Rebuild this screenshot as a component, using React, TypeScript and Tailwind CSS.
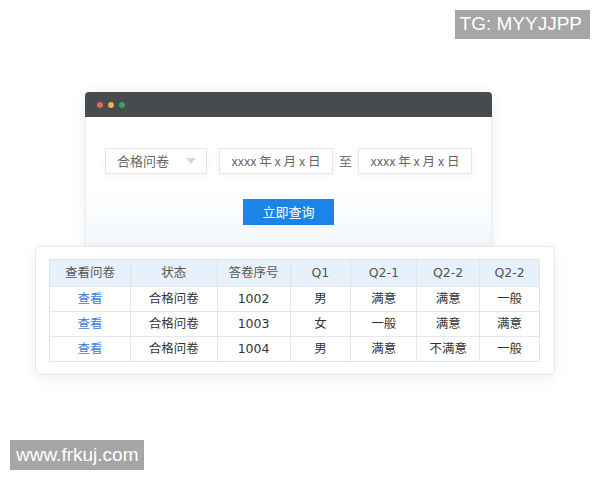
const font = { fontFamily: '"Noto Sans CJK SC", "Noto Sans", sans-serif' };
const tableFont = { fontFamily: '"DejaVu Sans", "Noto Sans CJK SC", sans-serif' };

const cols = ['w-[80px]', 'w-[87px]', 'w-[73px]', 'w-[61px]', 'w-[66px]', 'w-[63px]', 'w-[60px]'];
const head = ['查看问卷', '状态', '答卷序号', 'Q1', 'Q2-1', 'Q2-2', 'Q2-2'];
const rows = [
  ['查看', '合格问卷', '1002', '男', '满意', '满意', '一般'],
  ['查看', '合格问卷', '1003', '女', '一般', '满意', '满意'],
  ['查看', '合格问卷', '1004', '男', '满意', '不满意', '一般'],
];

function DateBox() {
  return (
    <div className="w-[114px] h-[26px] border border-[#e3e6ea] bg-white flex items-center justify-center text-[12.5px] text-[#666] shadow-[0_2px_6px_rgba(0,0,0,0.04)]">
      xxxx 年 x 月 x 日
    </div>
  );
}

export default function App() {
  return (
    <div className="relative w-[600px] h-[480px] bg-white overflow-hidden" style={font}>
      <div className="absolute right-[10px] top-[10px] bg-[#a6a6a6] text-white text-[19px] pl-[5px] pr-[8px] h-[29px] flex items-center" style={{ fontFamily: '"Liberation Sans", sans-serif' }}>
        TG: MYYJJPP
      </div>

      <div className="pt-[92px]">
        {/* browser window */}
        <div className="ml-[85px] w-[407px] rounded-t-[4px] overflow-hidden shadow-[0_0_14px_rgba(0,0,0,0.07)]">
          <div className="h-[25px] bg-[#474b4d] flex items-center gap-[5px] pl-[12px]">
            <span className="w-[6px] h-[6px] rounded-full bg-[#e0675a]" />
            <span className="w-[6px] h-[6px] rounded-full bg-[#e8b53c]" />
            <span className="w-[6px] h-[6px] rounded-full bg-[#2fa36b]" />
          </div>
          <div className="h-[140px] bg-gradient-to-b from-white via-white to-[#f1f6fb] border-x border-[#e8ebef] pt-[31px]">
            <div className="flex items-center pl-[19px]">
              <div className="w-[102px] h-[26px] border border-[#e3e6ea] bg-white flex items-center justify-between pl-[11px] pr-[10px] text-[13px] text-[#666] shadow-[0_2px_6px_rgba(0,0,0,0.04)]">
                <span>合格问卷</span>
                <svg width="10" height="6" viewBox="0 0 10 6"><path d="M0 0h10L5 6z" fill="#d4d7db" /></svg>
              </div>
              <div className="ml-[12px]"><DateBox /></div>
              <span className="w-[25px] text-center text-[13px] text-[#777]">至</span>
              <DateBox />
            </div>
            <div className="flex justify-center mt-[25px]">
              <div className="w-[91px] h-[26px] bg-[#1c84e8] text-white text-[13px] flex items-center justify-center">立即查询</div>
            </div>
          </div>
        </div>

        {/* table card */}
        <div className="relative -mt-[11px] ml-[35px] w-[520px] h-[129px] bg-white rounded-[5px] border border-[#e4e8ee] shadow-[0_4px_14px_rgba(0,0,0,0.06)] pt-[12px] pl-[13px]">
          <div className="w-[491px] border border-[#dfe5ec] text-[12.5px]" style={tableFont}>
            <div className="flex h-[26px] bg-[#e7f1fb] text-[#555]">
              {head.map((h, i) => (
                <div key={i} className={`${cols[i]} flex items-center justify-center ${i > 0 ? 'border-l border-[#dfe5ec]' : ''}`}>{h}</div>
              ))}
            </div>
            {rows.map((r, ri) => (
              <div key={ri} className="flex h-[25px] border-t border-[#e4e8ee] text-[#333]">
                {r.map((c, i) => (
                  <div key={i} className={`${cols[i]} flex items-center justify-center ${i > 0 ? 'border-l border-[#e4e8ee]' : ''} ${i === 0 ? 'text-[#3b82d6]' : ''}`}>{c}</div>
                ))}
              </div>
            ))}
          </div>
        </div>
      </div>

      <div className="absolute left-[10px] top-[440px] bg-[#a6a6a6] text-white text-[19px] px-[6px] h-[30px] flex items-center" style={{ fontFamily: '"Liberation Sans", sans-serif' }}>
        www.frkuj.com
      </div>
    </div>
  );
}
